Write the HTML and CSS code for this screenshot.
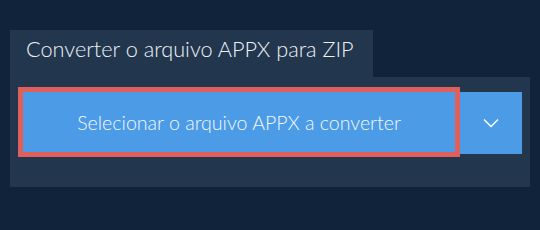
FILE: index.html
```html
<!DOCTYPE html>
<html lang="pt">
<head>
    <meta charset="UTF-8">
    <title>Converter APPX para ZIP</title>
    <link rel="stylesheet" href="styles.css">
</head>
<body>
    <div class="converter">
        <div class="tab">Converter o arquivo APPX para ZIP</div>
        <div class="panel">
            <div class="picker">
                <button class="pick-btn">Selecionar o arquivo APPX a converter</button>
                <button class="drop-btn">
                    <svg width="16" height="10" viewBox="0 0 16 10">
                        <path d="M1 1.5 L8 8.5 L15 1.5" fill="none" stroke="#fff" stroke-width="1.5"/>
                    </svg>
                </button>
            </div>
        </div>
    </div>
</body>
</html>
```

FILE: styles.css
```css
body {
    margin: 0;
    padding: 30px 10px;
    background-color: #10233a;
    font-family: Lato, "Open Sans", sans-serif;
}
.converter {
    width: 520px;
}
.tab {
    display: inline-block;
    height: 47px;
    box-sizing: border-box;
    padding: 6px 19px 0 16px;
    background: #22374e;
    color: #eef2f7;
    font-size: 21.7px;
    font-weight: 300;
    line-height: 26px;
}
.panel {
    background: #22374e;
    height: 110px;
    box-sizing: border-box;
    padding: 10px 8px 0 8px;
}
.picker {
    display: flex;
    align-items: flex-start;
}
.pick-btn {
    width: 442px;
    height: 70px;
    border: 5px solid #df5f5b;
    background: #4b9be7;
    color: #f5f8fc;
    font-family: Lato, "Open Sans", sans-serif;
    font-size: 19.6px;
    font-weight: 300;
    padding: 0;
}
.drop-btn {
    width: 62px;
    height: 62px;
    margin-top: 5px;
    border: none;
    background: #4b9be7;
    padding: 0;
    display: flex;
    align-items: center;
    justify-content: center;
}
```
